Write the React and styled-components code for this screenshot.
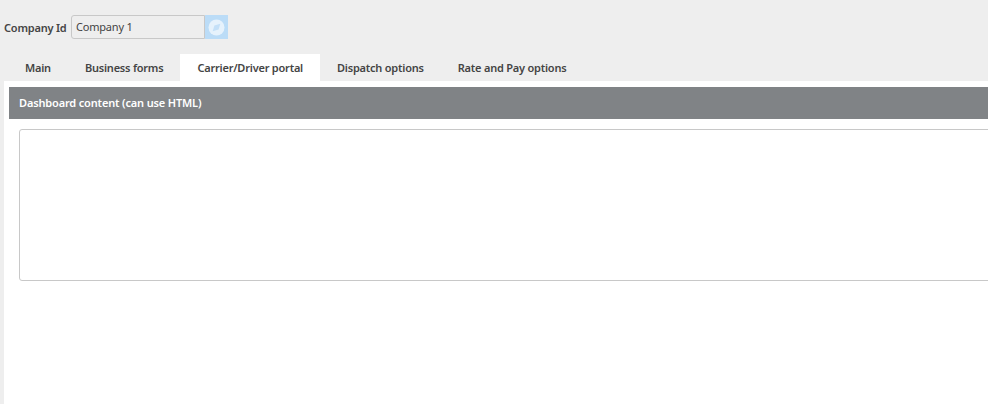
import React from "react"
import styled, { createGlobalStyle } from "styled-components"

const GlobalStyle = createGlobalStyle`
  html, body {
    margin: 0;
    padding: 0;
    height: 100%;
    background: #eeeeee;
    overflow: hidden;
  }
  #root {
    height: 100%;
  }
`

const Page = styled.div`
  width: 988px;
  height: 404px;
  display: flex;
  flex-direction: column;
  font-family: "Noto Sans", "Open Sans", sans-serif;
  letter-spacing: -0.2px;
  color: #444;
  overflow: hidden;
`

const CompanyRow = styled.div`
  display: flex;
  align-items: center;
  height: 24px;
  margin-top: 15px;
  padding-left: 4px;
`

const Label = styled.label`
  width: 67px;
  font-size: 11px;
  font-weight: 600;
  white-space: nowrap;
`

const CompanyInput = styled.div`
  box-sizing: border-box;
  width: 134px;
  height: 24px;
  padding-left: 4px;
  line-height: 21px;
  font-size: 11px;
  color: #444;
  background: #eeeeee;
  border: 1px solid #c8c8c8;
  border-radius: 3px 0 0 3px;
`

const LookupButton = styled.button`
  width: 23px;
  height: 24px;
  padding: 0;
  display: flex;
  align-items: center;
  justify-content: center;
  border: 0;
  background: #bbdcf7;
`

const TabBar = styled.div`
  display: flex;
  height: 27px;
  margin-top: 15px;
  padding-left: 8px;
`

const Tab = styled.div`
  padding: 0 17px;
  line-height: 28px;
  font-size: 11px;
  font-weight: 600;
  letter-spacing: -0.22px;
  white-space: nowrap;
  background: ${p => (p.$active ? "#fff" : "transparent")};
`

const Panel = styled.div`
  flex: 1;
  margin-left: 4px;
  padding: 6px 0 0 5px;
  background: #fff;
`

const SectionHeader = styled.div`
  height: 32px;
  padding-left: 10px;
  line-height: 32px;
  font-size: 11px;
  font-weight: 600;
  letter-spacing: -0.16px;
  color: #fff;
  background: #808386;
`

const ContentBox = styled.div`
  box-sizing: border-box;
  width: 1000px;
  height: 152px;
  margin: 10px 0 0 10px;
  background: #fff;
  border: 1px solid #c8c8c8;
  border-radius: 3px;
`

const CompassIcon = () => (
  <svg width="17" height="17" viewBox="0 0 17 17">
    <circle cx="8.5" cy="8.5" r="8" fill="#e6f2fc" />
    <path d="M12.3 4.7 L10.6 10.6 L4.7 12.3 L6.4 6.4 Z" fill="#c4e0f8" />
  </svg>
)

const tabs = ["Main", "Business forms", "Carrier/Driver portal", "Dispatch options", "Rate and Pay options"]

export default function App() {
  return (
    <Page>
      <GlobalStyle />
      <CompanyRow>
        <Label>Company Id</Label>
        <CompanyInput>Company 1</CompanyInput>
        <LookupButton>
          <CompassIcon />
        </LookupButton>
      </CompanyRow>
      <TabBar>
        {tabs.map(t => (
          <Tab key={t} $active={t === "Carrier/Driver portal"}>{t}</Tab>
        ))}
      </TabBar>
      <Panel>
        <SectionHeader>Dashboard content (can use HTML)</SectionHeader>
        <ContentBox />
      </Panel>
    </Page>
  )
}
